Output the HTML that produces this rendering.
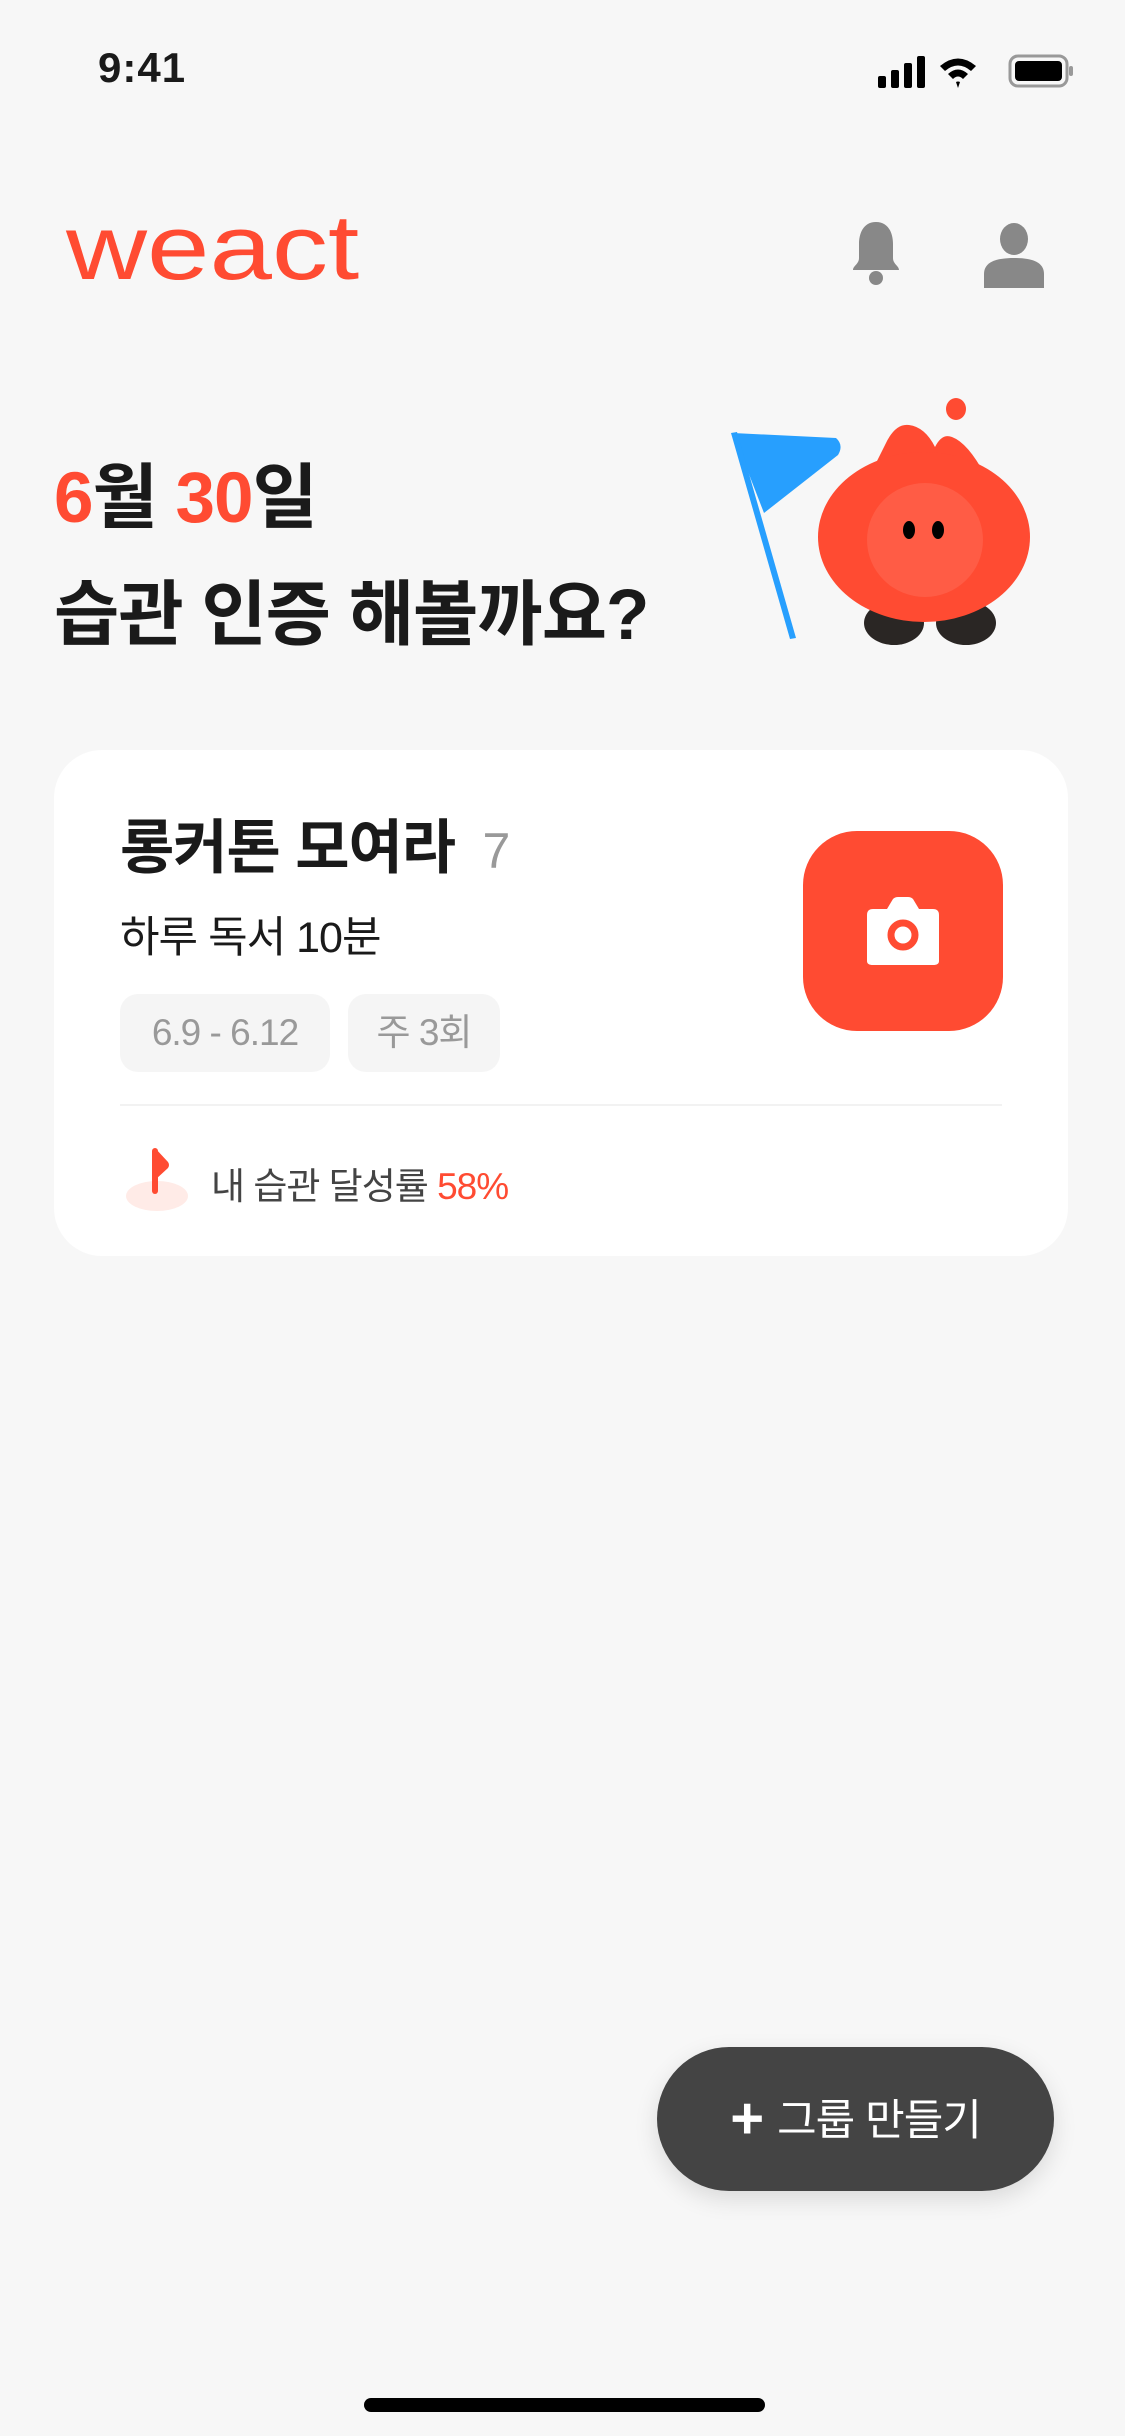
<!DOCTYPE html>
<html><head><meta charset="utf-8">
<style>
*{margin:0;padding:0;box-sizing:border-box}
body{width:1125px;height:2436px;background:#f7f7f7;position:relative;overflow:hidden;font-family:"Liberation Sans","Noto Sans CJK KR",sans-serif;color:#1a1a1a}
.abs{position:absolute}
</style></head><body>
<div class="abs" style="left:98px;top:44px;font-size:42px;font-weight:600;letter-spacing:1px">9:41</div>
<svg class="abs" style="left:878px;top:54px" width="200" height="36" viewBox="0 0 200 36">
 <rect x="0" y="22" width="8" height="12" rx="2" fill="#000"/>
 <rect x="13" y="16" width="8" height="18" rx="2" fill="#000"/>
 <rect x="26" y="9" width="8" height="25" rx="2" fill="#000"/>
 <rect x="39" y="2" width="8" height="32" rx="2" fill="#000"/>
 <path d="M62 12 Q80 -3 98 12 L93 17 Q80 6 67 17Z M70 20 Q80 11 90 20 L85 25 Q80 20 75 25Z M78 28 L80 34 L82 28 Q80 27 78 28Z" fill="#000"/>
 <rect x="132" y="2" width="57" height="30" rx="8" fill="none" stroke="#999" stroke-width="3"/>
 <rect x="137" y="7" width="47" height="20" rx="4" fill="#000"/>
 <rect x="191" y="12" width="4" height="10" rx="2" fill="#999"/>
</svg>
<div class="abs" style="left:66px;top:196px;font-size:92px;color:#ff4b32;letter-spacing:0;transform:scaleX(1.22);transform-origin:0 0;font-family:'Liberation Sans',sans-serif">weact</div>
<svg class="abs" style="left:845px;top:220px" width="62" height="70" viewBox="0 0 62 70">
 <path d="M31 2 C18 2 14 14 14 24 L14 38 C14 44 8 46 8 50 L54 50 C54 46 48 44 48 38 L48 24 C48 14 44 2 31 2Z" fill="#888"/>
 <circle cx="31" cy="58" r="7" fill="#888"/>
</svg>
<svg class="abs" style="left:980px;top:222px" width="68" height="66" viewBox="0 0 68 66">
 <ellipse cx="34" cy="17" rx="14" ry="16" fill="#888"/>
 <path d="M4 66 L4 52 C4 40 16 36 34 36 C52 36 64 40 64 52 L64 66Z" fill="#888"/>
</svg>
<div class="abs" style="left:54px;top:440px;font-size:71px;font-weight:700;line-height:117px;letter-spacing:-1px"><span style="color:#ff4b32">6</span>월 <span style="color:#ff4b32">30</span>일<br>습관 인증 해볼까요?</div>
<svg class="abs" style="left:720px;top:395px" width="330" height="260" viewBox="0 0 330 260">
 <path d="M13 38 L116 43 Q124 50 118 60 L44 118 Z" fill="#279ffe"/>
 <path d="M11 38 L17 37 L76 243 L70 244Z" fill="#279ffe"/>
 <ellipse cx="236" cy="14" rx="10" ry="11" fill="#ff4b32"/>
 <path d="M150 80 L165 50 Q175 28 189 30 Q205 32 215 52 Q222 38 232 42 Q248 48 265 80 Z" fill="#ff4b32"/>
 <ellipse cx="174" cy="228" rx="30" ry="22" fill="#2a2624"/>
 <ellipse cx="246" cy="228" rx="30" ry="22" fill="#2a2624"/>
 <ellipse cx="204" cy="142" rx="106" ry="85" fill="#ff4b32"/>
 <ellipse cx="205" cy="145" rx="58" ry="57" fill="#ff5c45"/>
 <ellipse cx="189" cy="135" rx="6" ry="9" fill="#000"/>
 <ellipse cx="218" cy="135" rx="6" ry="9" fill="#000"/>
</svg>
<div class="abs" style="left:54px;top:750px;width:1014px;height:506px;background:#fff;border-radius:48px"></div>
<div class="abs" style="left:120px;top:800px;font-size:59px;font-weight:700;letter-spacing:-1px">롱커톤 모여라 <span style="color:#999;font-weight:400;font-size:50px;margin-left:12px">7</span></div>
<div class="abs" style="left:120px;top:903px;font-size:43px;letter-spacing:-1px">하루 독서 10분</div>
<div class="abs" style="left:120px;top:994px;width:210px;height:78px;background:#f5f5f5;border-radius:18px;color:#999;font-size:37px;line-height:78px;text-align:center;letter-spacing:-1px">6.9 - 6.12</div>
<div class="abs" style="left:348px;top:994px;width:152px;height:78px;background:#f5f5f5;border-radius:18px;color:#999;font-size:37px;line-height:78px;text-align:center;letter-spacing:-1px">주 3회</div>
<div class="abs" style="left:803px;top:831px;width:200px;height:200px;background:#ff4b32;border-radius:54px"></div>
<svg class="abs" style="left:865px;top:895px" width="76" height="72" viewBox="0 0 76 72">
 <path d="M8 14 L22 14 L28 4 Q30 2 33 2 L43 2 Q46 2 48 4 L54 14 L68 14 Q74 14 74 20 L74 66 Q74 70 68 70 L8 70 Q2 70 2 66 L2 20 Q2 14 8 14Z" fill="#fff"/>
 <circle cx="38" cy="40" r="12" fill="none" stroke="#ff4b32" stroke-width="7"/>
</svg>
<div class="abs" style="left:120px;top:1104px;width:882px;height:2px;background:#f2f2f2"></div>
<svg class="abs" style="left:124px;top:1146px" width="66" height="66" viewBox="0 0 66 66">
 <ellipse cx="33" cy="50" rx="31" ry="15" fill="#ffebe7"/>
 <rect x="28" y="2" width="6" height="46" rx="3" fill="#ff4b32"/>
 <path d="M31 2 L44 16 Q46 19 44 22 L31 34Z" fill="#ff4b32"/>
</svg>
<div class="abs" style="left:211px;top:1156px;font-size:37px;color:#444;letter-spacing:-1px">내 습관 달성률 <span style="color:#ff4b32">58%</span></div>
<div class="abs" style="left:657px;top:2047px;width:397px;height:144px;background:#444;border-radius:72px;box-shadow:0 8px 24px rgba(0,0,0,0.12);color:#fff;font-size:43px;line-height:144px;text-align:center;letter-spacing:-1px"><span style="font-size:58px;font-weight:700;vertical-align:-3px;margin-right:14px">+</span>그룹 만들기</div>
<div class="abs" style="left:364px;top:2398px;width:401px;height:14px;background:#000;border-radius:7px"></div>
</body></html>
